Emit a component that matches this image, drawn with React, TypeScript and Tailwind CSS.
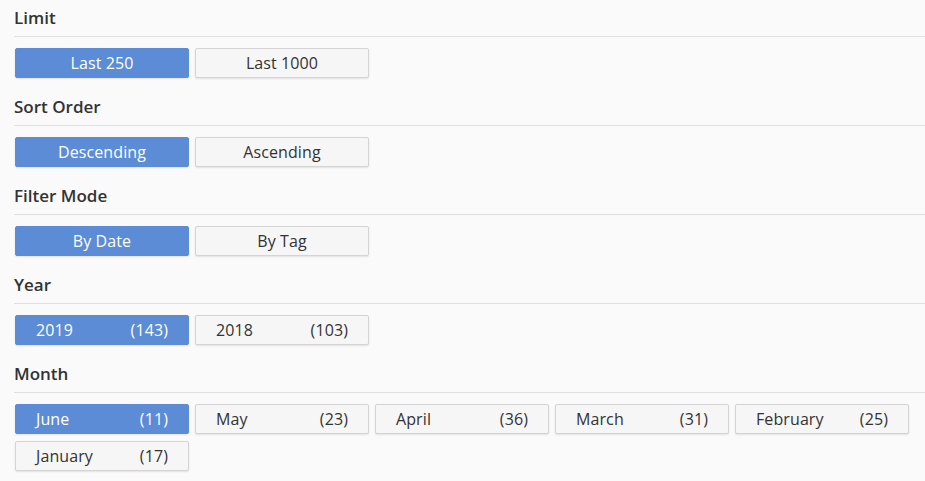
import React from "react";

type Opt = { label: string; count?: number; active?: boolean };

const sections: { title: string; options: Opt[] }[] = [
  { title: "Limit", options: [{ label: "Last 250", active: true }, { label: "Last 1000" }] },
  { title: "Sort Order", options: [{ label: "Descending", active: true }, { label: "Ascending" }] },
  { title: "Filter Mode", options: [{ label: "By Date", active: true }, { label: "By Tag" }] },
  { title: "Year", options: [{ label: "2019", count: 143, active: true }, { label: "2018", count: 103 }] },
  {
    title: "Month",
    options: [
      { label: "June", count: 11, active: true },
      { label: "May", count: 23 },
      { label: "April", count: 36 },
      { label: "March", count: 31 },
      { label: "February", count: 25 },
      { label: "January", count: 17 },
    ],
  },
];

function Btn({ o }: { o: Opt }) {
  const base =
    "h-[30px] w-[174px] rounded-[2px] border text-[16px] tracking-[0.1px] flex items-center shadow-[0_1px_2px_rgba(0,0,0,0.1)]";
  const color = o.active
    ? "bg-[#5b8cd5] border-[#5b8cd5] text-white"
    : "bg-[#f6f6f6] border-[#d4d4d4] text-[#333]";
  return (
    <div className={`${base} ${color} ${o.count !== undefined ? "justify-between px-[20px]" : "justify-center"}`}>
      <span>{o.label}</span>
      {o.count !== undefined && <span>({o.count})</span>}
    </div>
  );
}

export default function App() {
  return (
    <div
      className="w-[925px] h-[481px] bg-[#fafafa] pl-[14px] overflow-hidden"
      style={{ fontFamily: '"Open Sans", "Noto Sans", sans-serif' }}
    >
      {sections.map((s) => (
        <div key={s.title} className="pb-[11px]">
          <div className="pt-[6px] pb-[6px] border-b border-[#e0e0e0] text-[17px] leading-[24px] font-semibold text-[#333]">
            {s.title}
          </div>
          <div className="mt-[11px] pl-px flex flex-wrap gap-x-[6px] gap-y-[7px]">
            {s.options.map((o) => (
              <Btn key={o.label} o={o} />
            ))}
          </div>
        </div>
      ))}
    </div>
  );
}
